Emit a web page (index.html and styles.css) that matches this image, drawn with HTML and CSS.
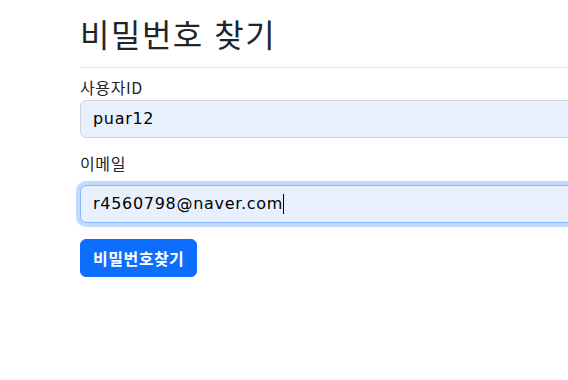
FILE: index.html
```html
<!DOCTYPE html>
<html lang="ko">
<head>
<meta charset="utf-8">
<title>비밀번호 찾기</title>
<link rel="stylesheet" href="styles.css">
</head>
<body>
<main class="page">
  <h2 class="title">비밀번호 찾기</h2>
  <hr class="divider">
  <form class="form">
    <label class="label label-first">사용자ID</label>
    <div class="field">puar12</div>
    <label class="label label-second">이메일</label>
    <div class="field field-focus">r4560798@naver.com<span class="caret"></span></div>
    <button type="button" class="btn">비밀번호찾기</button>
  </form>
</main>
</body>
</html>
```
FILE: styles.css
```css
html, body {
  margin: 0;
  padding: 0;
  background: #fff;
  overflow: hidden;
}
body {
  width: 568px;
  height: 380px;
  font-family: "Noto Sans CJK KR", "Noto Sans", sans-serif;
  color: #212529;
}
.page {
  padding-left: 80px;
  width: 560px;
  padding-top: 14px;
}
.title {
  margin: 0;
  font-size: 32px;
  font-weight: 400;
  letter-spacing: 1.5px;
  line-height: 38px;
  color: #212529;
}
.divider {
  margin: 15px 0 0;
  border: 0;
  border-top: 1px solid #dee2e6;
  height: 0;
}
.form {
  display: flex;
  flex-direction: column;
  align-items: flex-start;
}
.label {
  display: block;
  font-size: 16px;
  line-height: 24px;
  height: 24px;
  letter-spacing: 0.6px;
  color: #212529;
}
.label-first {
  margin-top: 7px;
  margin-bottom: 1px;
}
.label-second {
  margin-top: 13px;
  margin-bottom: 10px;
}
.field {
  box-sizing: border-box;
  width: 100%;
  height: 38px;
  padding: 6px 12px;
  border: 1px solid #ced4da;
  border-radius: 6px;
  background: #e8f0fe;
  font-family: "DejaVu Sans", sans-serif;
  font-size: 16px;
  line-height: 24px;
  letter-spacing: 0.7px;
  color: #000;
  display: flex;
  align-items: center;
}
.field-focus {
  border-color: #86b7fe;
  box-shadow: 0 0 0 4px rgba(13, 110, 253, 0.25);
}
.caret {
  display: inline-block;
  width: 1px;
  height: 20px;
  background: #000;
  margin-left: 0;
}
.btn {
  margin-top: 16px;
  height: 38px;
  padding: 0 12px;
  border: 1px solid #0d6efd;
  border-radius: 6px;
  background: #0d6efd;
  color: #fff;
  font-family: "Noto Sans CJK KR", sans-serif;
  font-size: 16px;
  font-weight: 700;
  letter-spacing: 0.5px;
  line-height: 24px;
}
```
